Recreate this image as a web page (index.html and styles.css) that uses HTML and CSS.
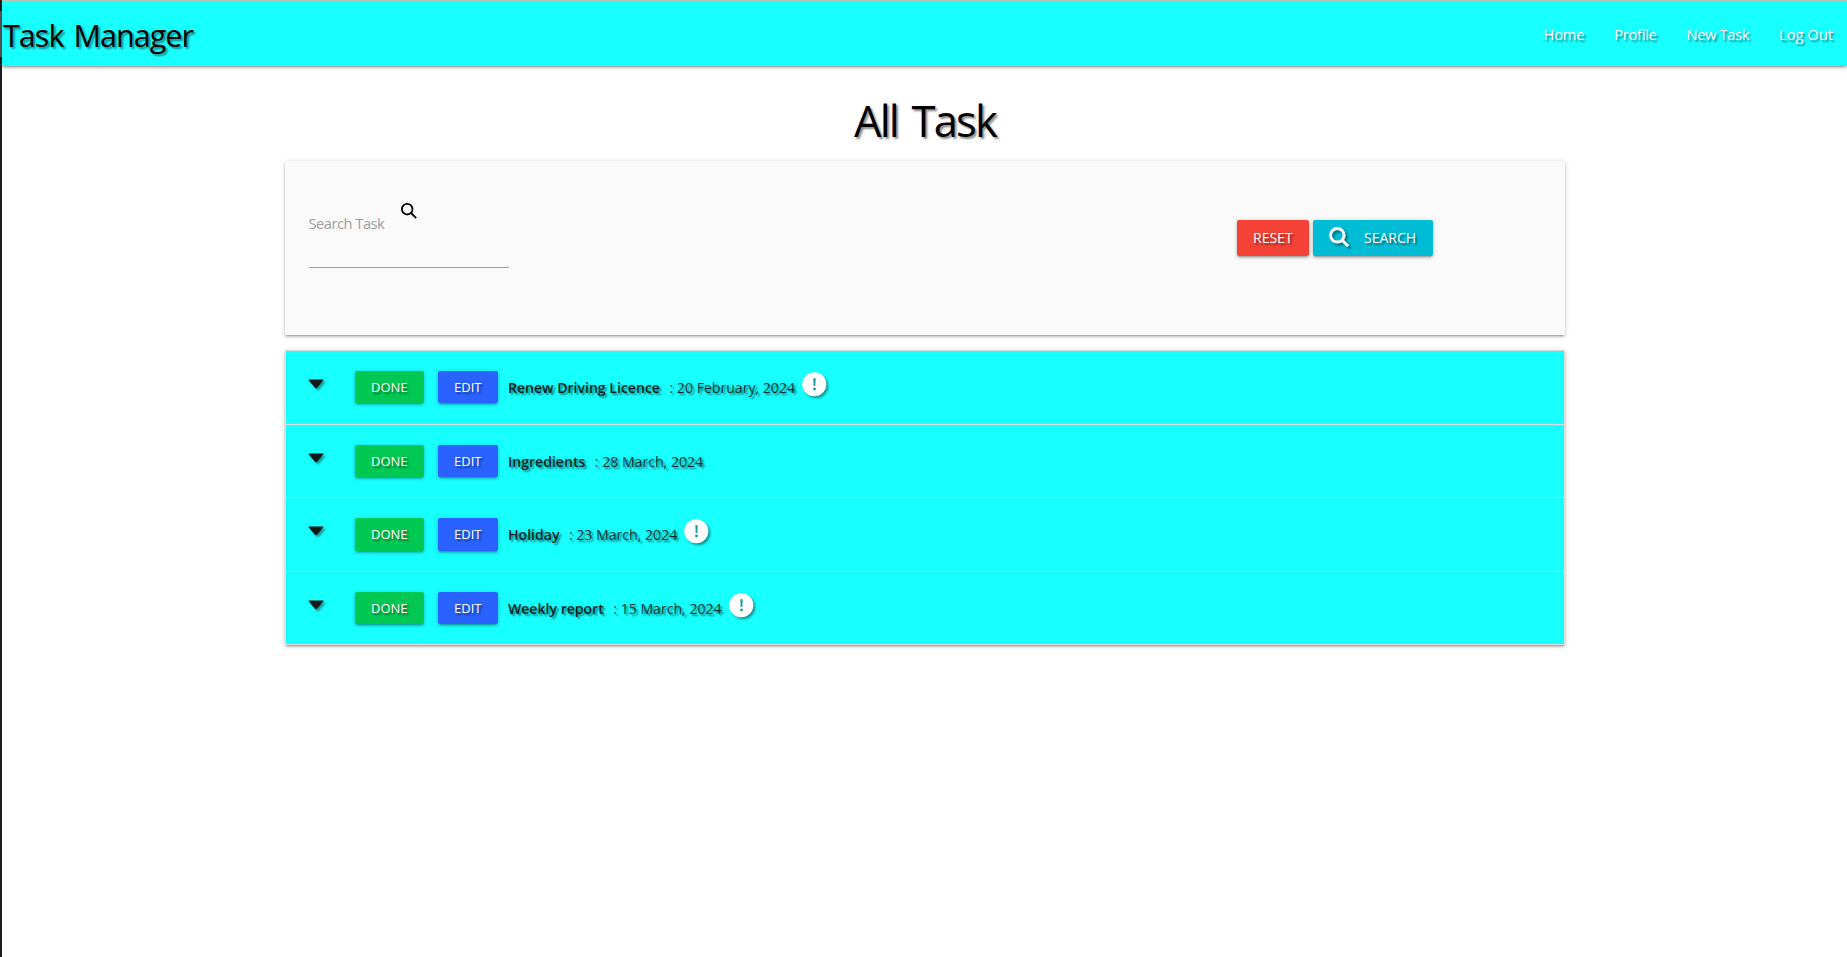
FILE: index.html
```html
<!DOCTYPE html>
<html lang="en">
<head>
<meta charset="utf-8">
<title>Task Manager</title>
<link rel="stylesheet" href="styles.css">
</head>
<body>
<div class="edge"><span class="edge-thumb"></span></div>
<div class="page">
  <nav class="navbar">
    <a class="brand">Task Manager</a>
    <ul class="links">
      <li class="l-home">Home</li><li class="l-profile">Profile</li><li class="l-new">New Task</li><li class="l-out">Log Out</li>
    </ul>
  </nav>
  <main class="container">
    <h1 class="title"><span>All Task</span></h1>
    <section class="card">
      <div class="field">
        <label class="label">Search Task</label>
        <svg class="find" viewBox="0 0 16 16"><circle cx="6.2" cy="6.2" r="5.3"/><path d="M10 10l5.2 5.2"/></svg>
      </div>
      <div class="actions">
        <button class="btn reset"><span>RESET</span></button>
        <button class="btn search"><svg class="glass" viewBox="0 0 21 21"><circle cx="8.3" cy="8.3" r="6.8"/><path d="M13 13l6.2 6.2"/></svg><span>SEARCH</span></button>
      </div>
    </section>
    <ul class="tasks">
      <li class="task"><svg class="caret" viewBox="0 0 16 10"><path d="M1.2.5h13.6q1.2 0 .4 1L9 8.700q-1 1-2 0L.8 1.500q-.8-1 .4-1z"/></svg><button class="btn done"><span>DONE</span></button><button class="btn edit"><span>EDIT</span></button><b class="name">Renew Driving Licence</b><span class="date">: 20 February, 2024</span><svg class="alert" viewBox="0 0 26 26"><circle cx="12.300" cy="12.200" r="12"/><path d="M11.300 6.300h2.400l-.4 7.600h-1.600z"/><circle class="dot" cx="12.500" cy="17" r="1.400"/></svg></li>
      <li class="task"><svg class="caret" viewBox="0 0 16 10"><path d="M1.2.5h13.6q1.2 0 .4 1L9 8.700q-1 1-2 0L.8 1.500q-.8-1 .4-1z"/></svg><button class="btn done"><span>DONE</span></button><button class="btn edit"><span>EDIT</span></button><b class="name">Ingredients</b><span class="date">: 28 March, 2024</span></li>
      <li class="task"><svg class="caret" viewBox="0 0 16 10"><path d="M1.2.5h13.6q1.2 0 .4 1L9 8.700q-1 1-2 0L.8 1.500q-.8-1 .4-1z"/></svg><button class="btn done"><span>DONE</span></button><button class="btn edit"><span>EDIT</span></button><b class="name">Holiday</b><span class="date">: 23 March, 2024</span><svg class="alert" viewBox="0 0 26 26"><circle cx="12.300" cy="12.200" r="12"/><path d="M11.300 6.300h2.400l-.4 7.600h-1.600z"/><circle class="dot" cx="12.500" cy="17" r="1.400"/></svg></li>
      <li class="task"><svg class="caret" viewBox="0 0 16 10"><path d="M1.2.5h13.6q1.2 0 .4 1L9 8.700q-1 1-2 0L.8 1.500q-.8-1 .4-1z"/></svg><button class="btn done"><span>DONE</span></button><button class="btn edit"><span>EDIT</span></button><b class="name">Weekly report</b><span class="date">: 15 March, 2024</span><svg class="alert" viewBox="0 0 26 26"><circle cx="12.300" cy="12.200" r="12"/><path d="M11.300 6.300h2.400l-.4 7.600h-1.600z"/><circle class="dot" cx="12.500" cy="17" r="1.400"/></svg></li>
    </ul>
  </main>
</div>
</body>
</html>
```
FILE: styles.css
```css
* { box-sizing: border-box; }
html, body { height: 100%; }
body {
  margin: 0;
  display: flex;
  overflow: hidden;
  background: #fff;
  color: rgba(0,0,0,.87);
  font: 15px/22px "Open Sans", "Noto Sans", sans-serif;
}
ul { list-style: none; margin: 0; padding: 0; }
.edge { width: 2px; background: #1c1a1e; flex: none; padding-top: 11px; }
.edge-thumb { display: block; height: 46px; background: #5a585c; }
.page { flex: 1; min-width: 0; }
.navbar {
  height: 66px;
  border-top: 1px solid #b9c4b4;
  background: #18ffff;
  display: flex;
  justify-content: space-between;
  align-items: center;
  box-shadow: 0 2px 2px 0 rgba(0,0,0,.14), 0 3px 1px -2px rgba(0,0,0,.12), 0 1px 5px 0 rgba(0,0,0,.2);
  text-shadow: 2px 2px 2px rgba(0,0,0,.45);
  white-space: nowrap;
}
.brand { color: #000; font-size: 30.5px; line-height: 40px; letter-spacing: -.95px; word-spacing: 3px; margin-top: 3px; padding-left: 1px; }
.links { display: flex; color: #fff; font-size: 14.7px; padding-top: 1px; }
.links li { padding: 0 15px; }
.links .l-out { padding-right: 14px; }
.l-home { letter-spacing: -.2px; }
.l-profile { letter-spacing: -.3px; }
.l-new { letter-spacing: -.37px; }
.container { width: 1280px; margin-left: 283px; }
.title {
  margin: 0; height: 95px; padding-top: 25px;
  text-align: center; color: #000;
  font-size: 43.5px; line-height: 60px; font-weight: 400; letter-spacing: -1.8px; word-spacing: 4px;
  text-shadow: 2px 2px 2px rgba(0,0,0,.45);
}
.card {
  height: 174px; background: #fafafa; border-radius: 2px;
  padding: 0 132px 0 24px;
  display: flex; justify-content: space-between;
  box-shadow: 0 2px 2px 0 rgba(0,0,0,.14), 0 3px 1px -2px rgba(0,0,0,.12), 0 1px 5px 0 rgba(0,0,0,.2);
}
.field { width: 200px; height: 107px; border-bottom: 1px solid #9e9e9e; display: flex; }
.label { width: 92px; color: #9e9e9e; font-size: 14.7px; letter-spacing: -.5px; padding-top: 51px; margin-left: -.5px; white-space: nowrap; }
.find { width: 16px; height: 16px; margin-top: 42px; fill: none; stroke: #000; stroke-width: 1.8; }
.actions { display: flex; gap: 4px; padding-top: 59px; }
.btn {
  border: 0; border-radius: 2px; height: 36px; padding: 0 16px;
  display: flex; align-items: center; flex: none; color: #fff;
  font: 13px/20px "Open Sans", "Noto Sans", sans-serif;
  text-shadow: 2px 2px 2px rgba(0,0,0,.45);
  box-shadow: 0 2px 2px 0 rgba(0,0,0,.14), 0 3px 1px -2px rgba(0,0,0,.12), 0 1px 5px 0 rgba(0,0,0,.2);
}
.reset { width: 72px; background: #f44336; font-size: 14px; }
.search { width: 120px; background: #00bcd4; font-size: 14px; }
.glass { width: 21px; height: 21px; margin: -1px 14px 0 0; flex: none; overflow: visible; fill: none; stroke: #fff; stroke-width: 3; filter: drop-shadow(2px 2px 1px rgba(0,0,0,.4)); }
.tasks {
  margin-top: 15px; border: 1px solid #ddd; border-bottom: 0;
  box-shadow: 0 2px 2px 0 rgba(0,0,0,.14), 0 3px 1px -2px rgba(0,0,0,.12), 0 1px 5px 0 rgba(0,0,0,.2);
}
.task {
  height: 73.6px; border-bottom: 1px solid #ddd; background: #18ffff;
  display: flex; align-items: flex-start; padding: 20px 22px 0; font-size: 14px;
  text-shadow: 2px 2px 2px rgba(0,0,0,.5);
}
.caret { width: 16px; height: 10px; margin: 8px 31px 0 0; overflow: visible; fill: #101818; filter: drop-shadow(2px 2px 1px rgba(0,0,0,.4)); }
.task .btn { height: 32.400px; }
.done { width: 69px; background: #00c853; margin-right: 14px; }
.edit { width: 60px; background: #2962ff; margin-right: 10px; }
.name { font-weight: 600; letter-spacing: .03px; padding-top: 6px; white-space: nowrap; }
.date { font-size: 14.1px; color: rgba(0,0,0,.8); padding: 6px 0 0 9.500px; white-space: nowrap; }
.alert { width: 26px; height: 26px; margin: 1px 0 0 7px; overflow: visible; fill: #fff; filter: drop-shadow(2px 2px 1px rgba(0,0,0,.4)); }
.alert path, .alert .dot { fill: #169a9c; }
```
